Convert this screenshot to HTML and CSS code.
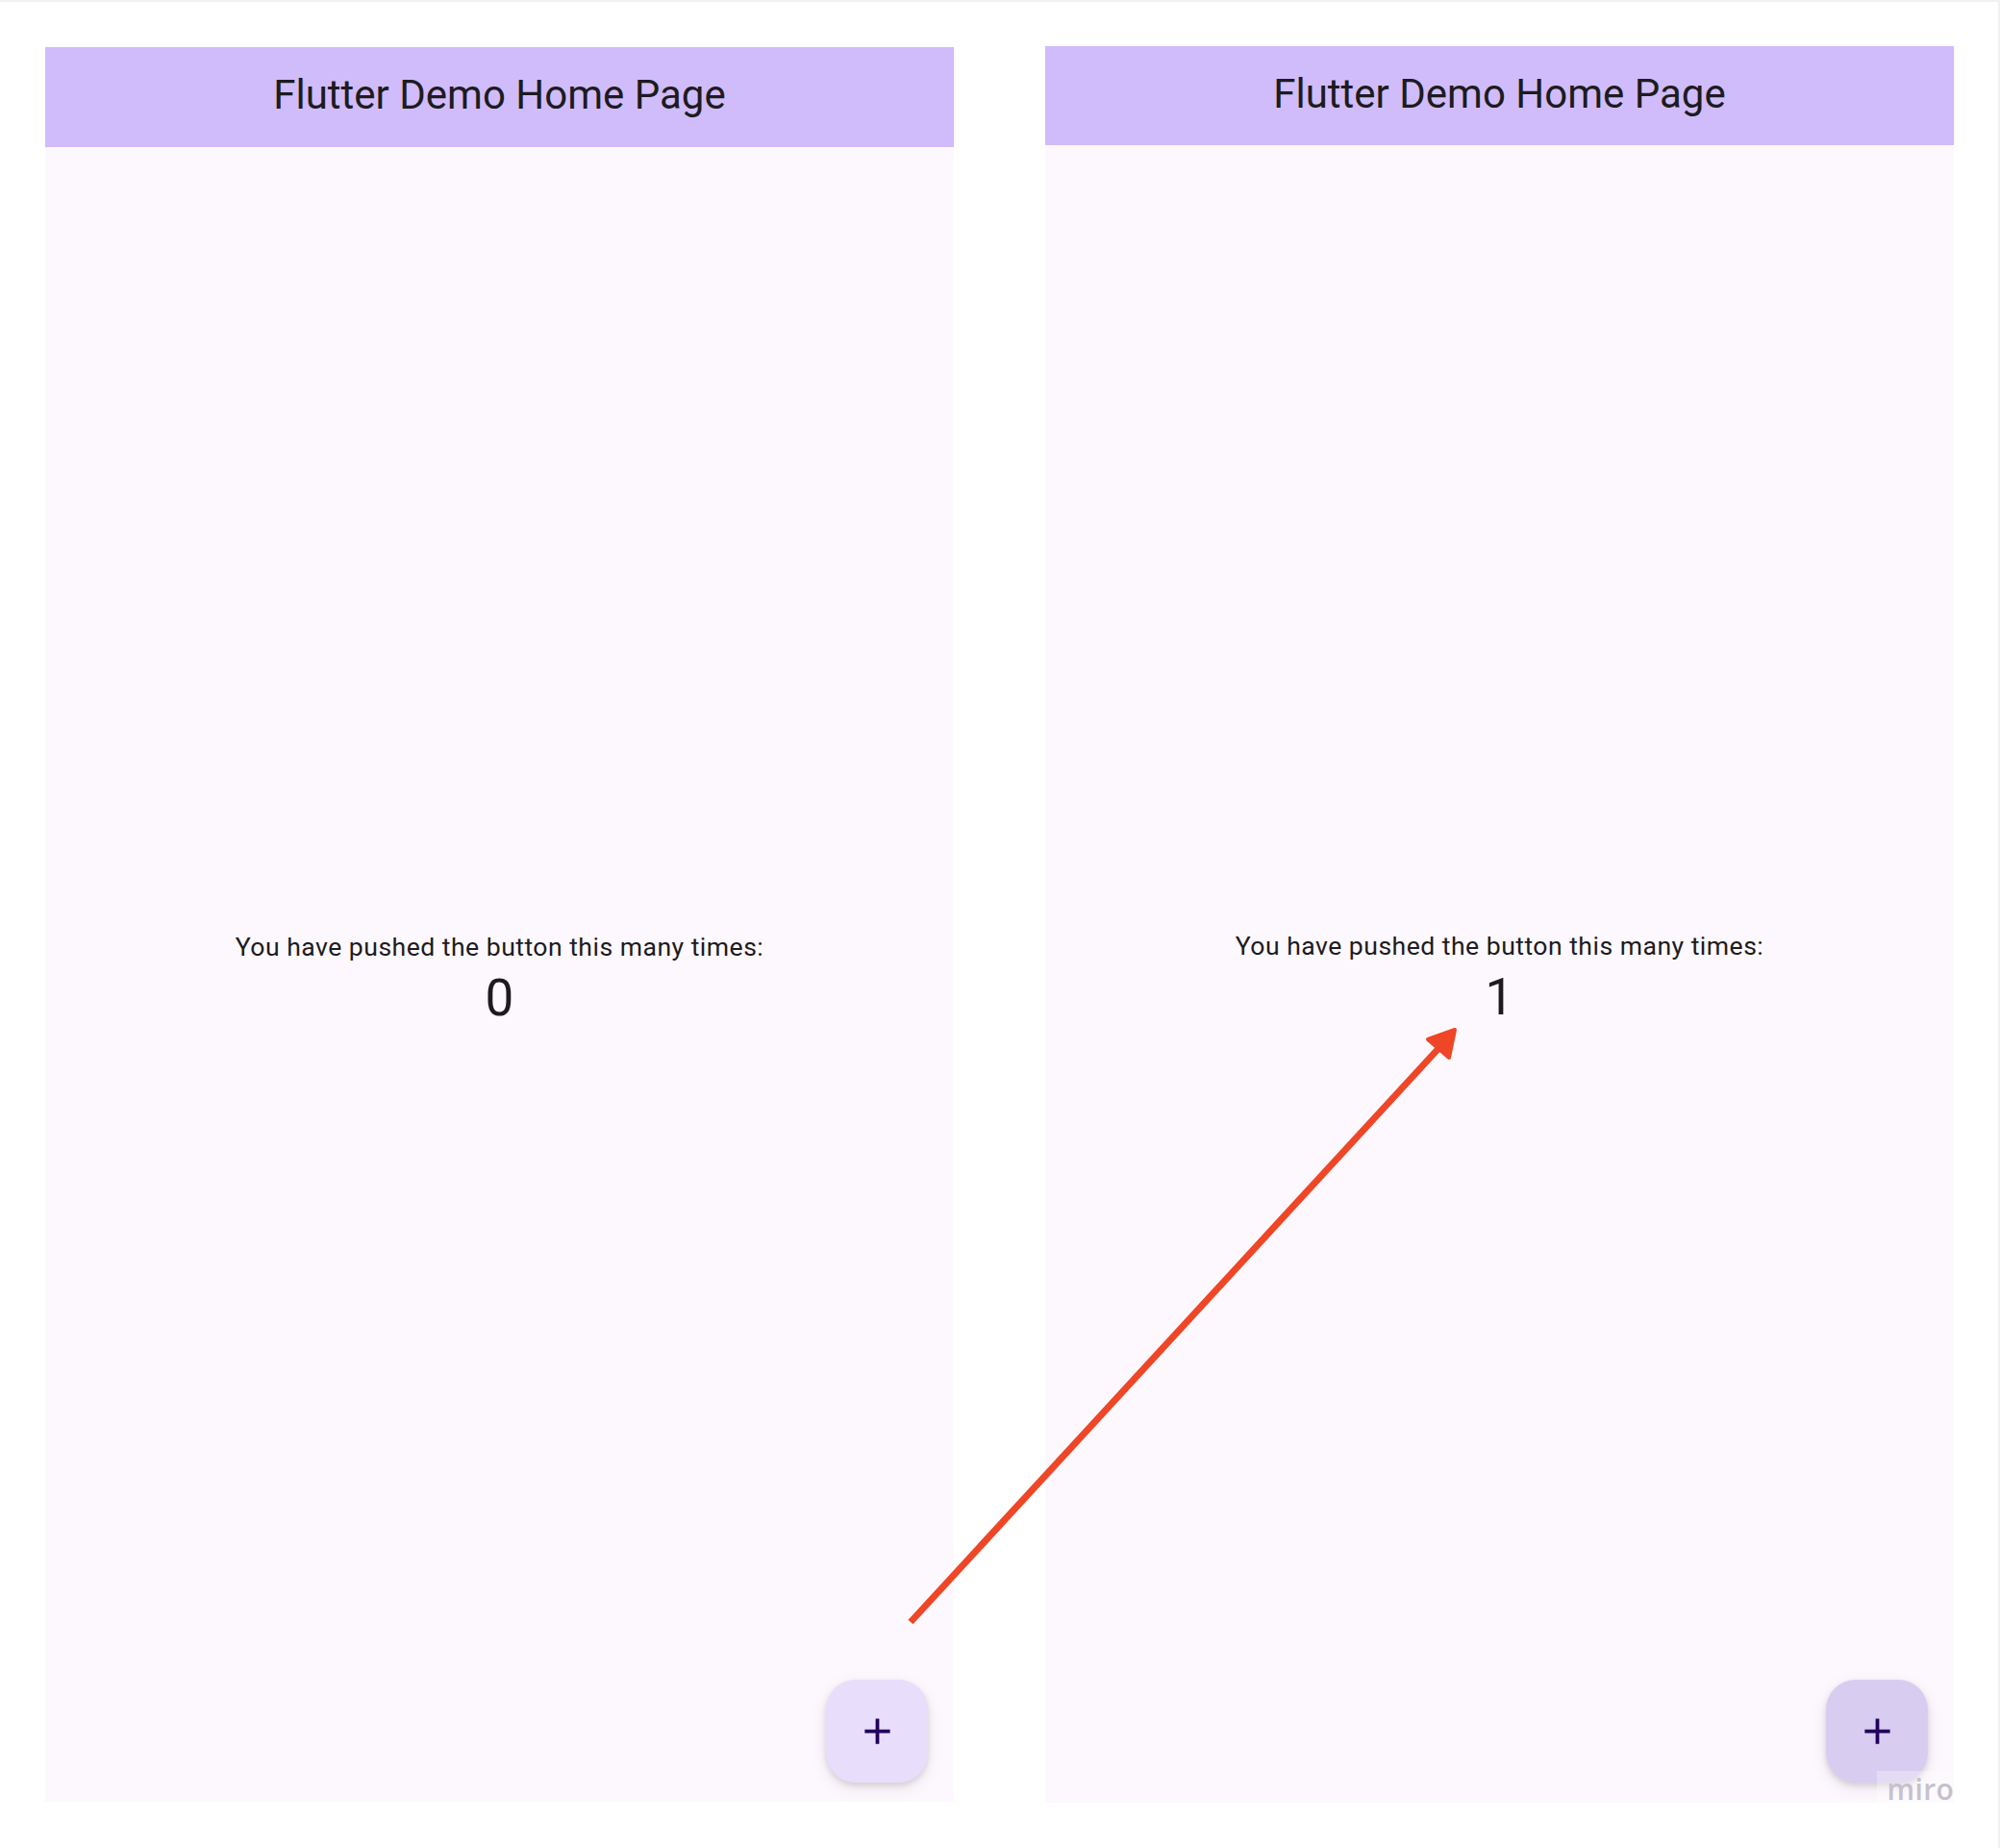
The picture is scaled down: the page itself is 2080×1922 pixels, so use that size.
FILE: index.html
```html
<!DOCTYPE html>
<html lang="en">
<head>
<meta charset="utf-8">
<title>Flutter Demo Home Page</title>
<link rel="stylesheet" href="styles.css">
</head>
<body>
<div class="canvas">
  <div class="screens">
    <section class="phone">
      <header class="appbar"><h1 class="title">Flutter Demo Home Page</h1></header>
      <main class="content">
        <p class="label">You have pushed the button this many times:</p>
        <p class="counter">0</p>
      </main>
      <button class="fab" type="button" aria-label="Increment">
        <svg class="fab-icon" viewBox="0 0 24 24" width="45" height="45"><path d="M19 13h-6v6h-2v-6H5v-2h6V5h2v6h6v2z"/></svg>
      </button>
    </section>
    <section class="phone phone-right">
      <header class="appbar"><h1 class="title">Flutter Demo Home Page</h1></header>
      <main class="content">
        <p class="label">You have pushed the button this many times:</p>
        <p class="counter">1</p>
      </main>
      <button class="fab fab-pressed" type="button" aria-label="Increment">
        <svg class="fab-icon" viewBox="0 0 24 24" width="45" height="45"><path d="M19 13h-6v6h-2v-6H5v-2h6V5h2v6h6v2z"/></svg>
      </button>
      <div class="watermark">miro</div>
    </section>
  </div>
  <svg class="arrow" width="2080" height="1922" viewBox="0 0 2080 1922">
    <line x1="947" y1="1685" x2="1502" y2="1082" stroke="#ee4626" stroke-width="7" stroke-linecap="butt"/>
    <polygon points="1513,1069 1485,1079 1507,1098" fill="#ee4626" stroke="#ee4626" stroke-width="4" stroke-linejoin="round"/>
  </svg>
</div>
</body>
</html>
```
FILE: styles.css
```css
html, body {
  margin: 0;
  padding: 0;
  background: #ffffff;
}
body {
  font-family: Roboto, "Noto Sans", "Liberation Sans", sans-serif;
}
.canvas {
  position: relative;
  width: 2080px;
  height: 1922px;
  box-sizing: border-box;
  border-top: 2px solid #f1f1f1;
  border-right: 2px solid #f1f1f1;
  overflow: hidden;
}
.screens {
  display: grid;
  grid-template-columns: 945px 945px;
  column-gap: 95px;
  padding: 47px 0 0 47px;
}
.phone {
  position: relative;
  display: flex;
  flex-direction: column;
  height: 1825px;
  background: #fdf8fe;
}
.phone-right {
  margin-top: -1px;
  height: 1827px;
}
.appbar {
  height: 104px;
  flex: none;
  box-sizing: border-box;
  padding-bottom: 5px;
  display: flex;
  align-items: center;
  justify-content: center;
  background: #d0bcfb;
}
.phone-right .appbar {
  height: 103px;
}
.title {
  margin: 0;
  font-weight: 400;
  font-size: 42px;
  color: #1d1b20;
  letter-spacing: 0;
}
.content {
  flex: 1;
  display: flex;
  flex-direction: column;
  align-items: center;
  justify-content: center;
  padding-top: 10px;
}
.label {
  margin: 0;
  font-size: 26.6px;
  line-height: 38px;
  letter-spacing: 0.47px;
  color: #1d1b20;
}
.counter {
  margin: 0;
  font-size: 53px;
  line-height: 68px;
  color: #1d1b20;
}
.fab {
  position: absolute;
  right: 27px;
  bottom: 20px;
  width: 106px;
  height: 107px;
  border: 0;
  padding: 0;
  border-radius: 31px;
  background: #e9ddfc;
  display: flex;
  align-items: center;
  justify-content: center;
  box-shadow: 0 3px 6px rgba(0, 0, 0, 0.12), 0 6px 18px rgba(0, 0, 0, 0.08);
}
.fab-pressed {
  background: #d8cdf1;
  bottom: 21px;
}
.fab-icon {
  fill: #21005d;
}
.watermark {
  position: absolute;
  right: -2px;
  bottom: -5px;
  width: 82px;
  height: 38px;
  box-sizing: border-box;
  padding-right: 2px;
  background: rgba(255, 255, 255, 0.3);
  color: #c4c1cc;
  font-family: "Open Sans", "Noto Sans", sans-serif;
  font-weight: 600;
  font-size: 30px;
  line-height: 38px;
  text-align: right;
  letter-spacing: 0.3px;
}
.arrow {
  position: absolute;
  left: 0;
  top: 0;
  pointer-events: none;
}
```
